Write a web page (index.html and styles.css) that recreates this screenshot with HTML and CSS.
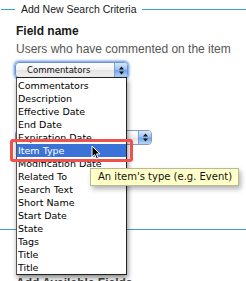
FILE: index.html
```html
<!DOCTYPE html>
<html lang="en">
<head>
    <meta charset="UTF-8">
    <title>Add New Search Criteria</title>
    <link rel="stylesheet" href="styles.css">
</head>
<body>
    <div class="page">
        <div class="legend">
            <span class="legend-line short"></span>
            <span class="legend-text">Add New Search Criteria</span>
            <span class="legend-line"></span>
        </div>
        <div class="group">
            <h3 class="field-name">Field name</h3>
            <p class="hint">Users who have commented on the item</p>
            <div class="select focused">
                <span class="select-text">Commentators</span>
                <span class="stepper">
                    <svg width="7" height="9" viewBox="0 0 7 9"><path d="M3.5 0.5 L6 3.5 H1 Z M1 5.5 H6 L3.5 8.5 Z" fill="#111"/></svg>
                </span>
            </div>
            <div class="select wide">
                <span class="select-text"></span>
                <span class="stepper">
                    <svg width="7" height="9" viewBox="0 0 7 9"><path d="M3.5 0.5 L6 3.5 H1 Z M1 5.5 H6 L3.5 8.5 Z" fill="#111"/></svg>
                </span>
            </div>
        </div>
        <div class="legend lower">
            <span class="legend-line"></span>
        </div>
        <div class="group">
            <h3 class="field-name bottom">Add Available Fields</h3>
        </div>
    </div>

    <!-- open dropdown of the focused select -->
    <ul class="dropdown">
        <li>Commentators</li>
        <li>Description</li>
        <li>Effective Date</li>
        <li>End Date</li>
        <li>Expiration Date</li>
        <li class="active">Item Type</li>
        <li>Modification Date</li>
        <li>Related To</li>
        <li>Search Text</li>
        <li>Short Name</li>
        <li>Start Date</li>
        <li>State</li>
        <li>Tags</li>
        <li>Title</li>
        <li>Title</li>
    </ul>
    <div class="callout"></div>
    <svg class="cursor" width="11" height="15" viewBox="0 0 11 15">
        <path d="M1 1 L1 12 L3.6 9.6 L5.6 14 L7.4 13.2 L5.5 8.9 L9 8.9 Z" fill="#000" stroke="#fff" stroke-width="1" stroke-linejoin="round"/>
    </svg>
    <div class="tooltip">An item's type (e.g. Event)</div>
</body>
</html>
```

FILE: styles.css
```css
/* Reset */
* {
    margin: 0;
    padding: 0;
    box-sizing: border-box;
}

body {
    font-family: 'Liberation Sans', Arial, sans-serif;
    background-color: #fff;
    color: #222;
    width: 246px;
    height: 281px;
    overflow: hidden;
    position: relative;
}

.legend {
    display: flex;
    align-items: center;
    height: 16px;
    margin-top: 1px;
}

    .legend.lower {
        margin-top: 76px;
    }

.legend-line {
    flex: 1;
    height: 1px;
    background-color: #3d9ad8;
}

    .legend-line.short {
        flex: none;
        width: 14px;
        margin-left: 1px;
    }

.legend-text {
    font-size: 10.5px;
    color: #1a1a1a;
    padding: 0 5px 0 6px;
    white-space: nowrap;
}

.group {
    padding-left: 16px;
}

.field-name {
    font-size: 12px;
    line-height: 14px;
    font-weight: bold;
    color: #1a1a1a;
    margin-top: 7px;
}

    .field-name.bottom {
        margin-top: 39px;
        color: #444;
    }

.hint {
    font-size: 12px;
    line-height: 14px;
    color: #555;
    margin-top: 4px;
}

/* aqua style select */
.select {
    display: flex;
    align-items: center;
    width: 113px;
    height: 16px;
    margin-top: 6px;
    margin-left: -1px;
    border: 1px solid #8a9bb5;
    border-radius: 4px;
    background: linear-gradient(#fff, #f2f2f2 50%, #e2e2e2 51%, #f4f4f4);
    overflow: hidden;
}

    .select.focused {
        border-color: #6f94cf;
        box-shadow: 0 0 0 1px #8fb4ea, 0 0 2px 2px rgba(100, 150, 230, 0.55);
    }

    .select.wide {
        width: 137px;
        height: 15px;
        margin-top: 52px;
    }

.select-text {
    flex: 1;
    font-family: 'DejaVu Sans', sans-serif;
    font-size: 8.5px;
    color: #111;
    padding-left: 11px;
}

.stepper {
    width: 13px;
    height: 100%;
    display: flex;
    align-items: center;
    justify-content: center;
    border-left: 1px solid #7f9fcf;
    background: linear-gradient(#d9e8fb, #9cc3f3 45%, #6fa4ea 55%, #b9d6f8);
}

.dropdown {
    position: absolute;
    left: 16px;
    top: 77px;
    width: 111px;
    padding-top: 1px;
    list-style: none;
    background-color: #fff;
    border: 1px solid #222;
    border-left-color: #555;
    box-shadow: 1px 3px 5px rgba(0, 0, 0, 0.45);
    font-family: 'DejaVu Sans', sans-serif;
    font-size: 9.5px;
    line-height: 13px;
    color: #000;
}

    .dropdown li {
        padding-left: 1px;
        height: 13px;
        white-space: nowrap;
    }

        .dropdown li.active {
            background-color: #3b72d8;
            color: #fff;
        }

.callout {
    position: absolute;
    left: 10px;
    top: 139px;
    width: 123px;
    height: 23px;
    border: 3px solid #ef524d;
    border-radius: 3px;
}

.cursor {
    position: absolute;
    left: 91px;
    top: 145px;
}

.tooltip {
    position: absolute;
    left: 90px;
    top: 168px;
    height: 18px;
    padding: 0 6px 0 7px;
    background-color: #ffffc8;
    border: 1px solid #b9b99a;
    box-shadow: 2px 3px 5px rgba(0, 0, 0, 0.3);
    font-family: 'DejaVu Sans', sans-serif;
    font-size: 10px;
    line-height: 16px;
    color: #111;
    white-space: nowrap;
}
```
